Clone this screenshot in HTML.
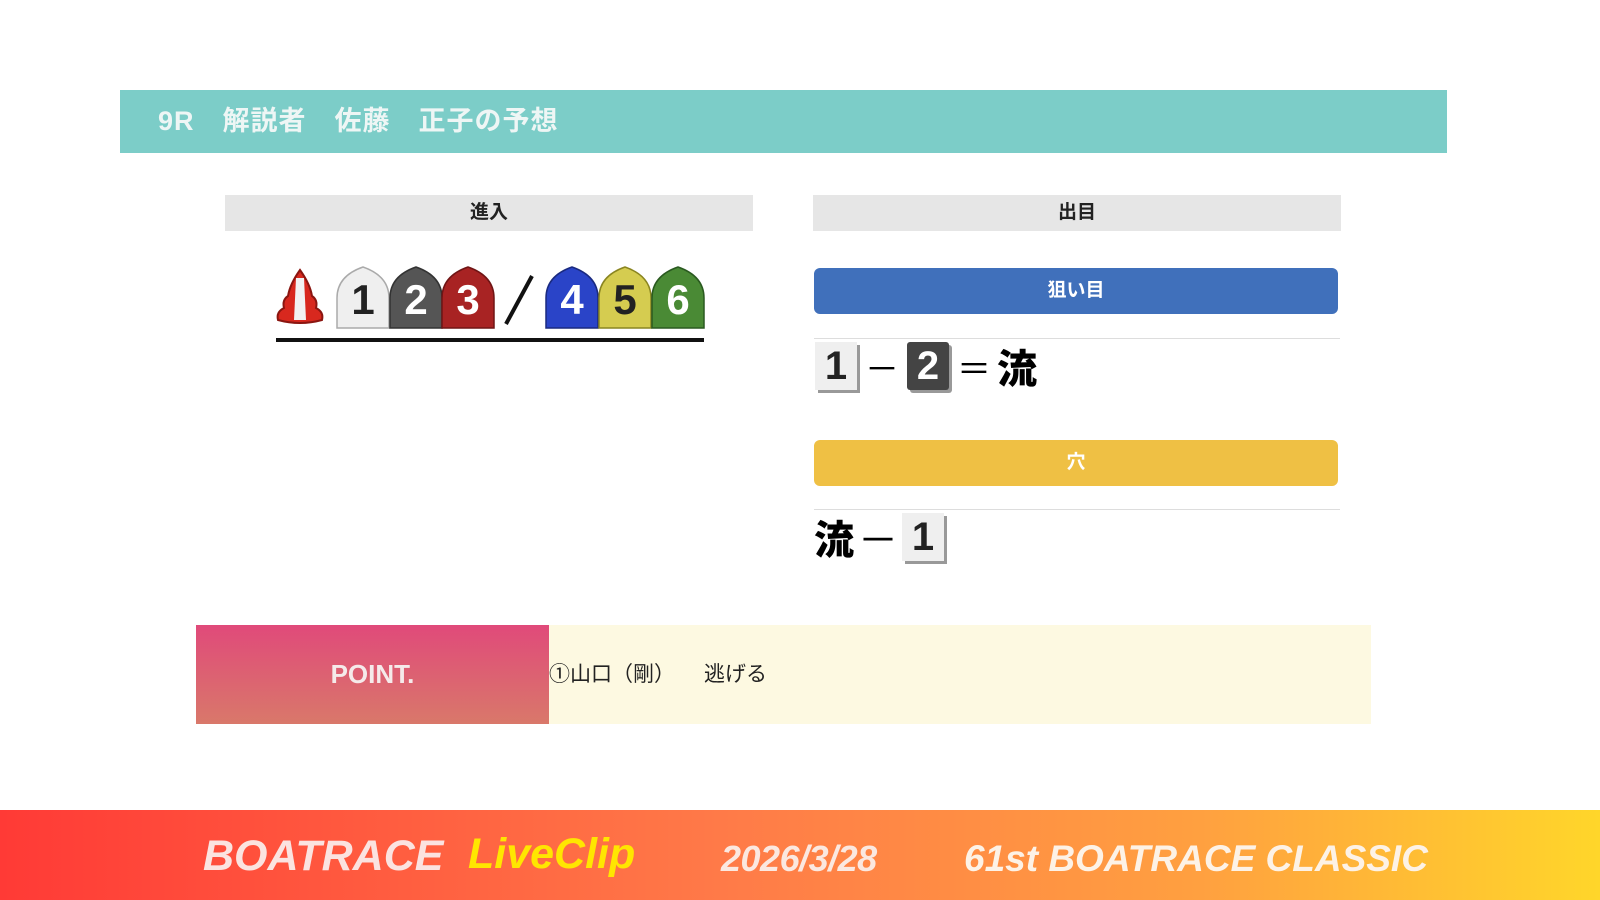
<!DOCTYPE html>
<html><head><meta charset="utf-8"><style>
*{margin:0;padding:0;box-sizing:border-box}
body{width:1600px;height:900px;background:#fff;position:relative;overflow:hidden;font-family:"Liberation Sans","Noto Sans CJK JP",sans-serif}
.a{position:absolute}
.hdr{left:120px;top:90px;width:1327px;height:63px;background:#7ccdc8;color:#eef6f5;font-weight:bold;font-size:27px;line-height:63px;padding-left:38px;white-space:pre;letter-spacing:1px}
.gh{top:195px;height:36px;width:528px;background:#e6e6e6;text-align:center;font-weight:bold;font-size:19px;line-height:36px;color:#222}
.btn{left:814px;width:524px;height:46px;border-radius:6px;color:#fff;text-align:center;font-weight:bold;font-size:19px;line-height:46px}
.ln{left:814px;width:526px;height:1px;background:#ddd}
.k{display:inline-block;width:42px;height:48px;font-size:40px;font-weight:bold;text-align:center;line-height:48px;box-shadow:3px 3px 0 #999;vertical-align:middle}
.big{font-size:40px;font-weight:900;vertical-align:middle}
</style></head><body>
<div class="a hdr">9R　解説者　佐藤　正子の予想</div>
<div class="a gh" style="left:225px">進入</div>
<div class="a gh" style="left:813px">出目</div>

<svg class="a" style="left:270px;top:262px" width="440" height="82" viewBox="0 0 440 82">
<g stroke-width="2">
<path d="M8,58 Q6,50 14,46 Q12,38 18,34 Q20,22 30,8 Q40,22 42,34 Q48,38 46,46 Q54,50 52,58 Q30,64 8,58Z" fill="#d8281e" stroke="#8a1510"/>
<path d="M26,16 L24,58 L36,58 L34,16Z" fill="#f2f2f2"/>
</g>
<g stroke-width="1.5" font-family="Liberation Sans" font-weight="bold" font-size="42" text-anchor="middle">
<path d="M67,66 V36 Q67,14 93,5 Q119,14 119,36 V66Z" fill="#efefef" stroke="#aaa"/>
<text x="93" y="52" fill="#222">1</text>
<path d="M120,66 V36 Q120,14 146,5 Q172,14 172,36 V66Z" fill="#555" stroke="#333"/>
<text x="146" y="52" fill="#fff">2</text>
<path d="M172,66 V36 Q172,14 198,5 Q224,14 224,36 V66Z" fill="#a82323" stroke="#701515"/>
<text x="198" y="52" fill="#fff">3</text>
<path d="M276,66 V36 Q276,14 302,5 Q328,14 328,36 V66Z" fill="#2a44c8" stroke="#1a2a80"/>
<text x="302" y="52" fill="#fff">4</text>
<path d="M329,66 V36 Q329,14 355,5 Q381,14 381,36 V66Z" fill="#d5cc50" stroke="#8a8520"/>
<text x="355" y="52" fill="#222">5</text>
<path d="M382,66 V36 Q382,14 408,5 Q434,14 434,36 V66Z" fill="#4a8a35" stroke="#2a5a20"/>
<text x="408" y="52" fill="#fff">6</text>
</g>
<line x1="236" y1="62" x2="262" y2="14" stroke="#111" stroke-width="4"/>
<rect x="6" y="76" width="428" height="4" fill="#111"/>
</svg>

<div class="a btn" style="top:268px;background:#4070bb">狙い目</div>
<div class="a ln" style="top:338px"></div>
<div class="a" style="left:815px;top:337px;white-space:nowrap">
<span class="k" style="background:#efefef;color:#222">1</span><span class="big" style="margin:0 8px 0 8px;font-weight:400;font-size:34px">－</span><span class="k" style="background:#444;color:#fff;border-radius:3px">2</span><span class="big" style="margin:0 6px 0 8px;font-weight:400;font-size:34px">＝</span><span class="big">流</span>
</div>
<div class="a btn" style="top:440px;background:#efc044">穴</div>
<div class="a ln" style="top:509px"></div>
<div class="a" style="left:814px;top:508px;white-space:nowrap">
<span class="big">流</span><span class="big" style="margin:0 4px;font-weight:400">－</span><span class="k" style="background:#efefef;color:#222">1</span>
</div>

<div class="a" style="left:196px;top:625px;width:353px;height:99px;background:linear-gradient(#e04a7a,#d9786a);color:#f5eaea;font-weight:bold;font-size:26px;line-height:99px;text-align:center">POINT.</div>
<div class="a" style="left:549px;top:625px;width:822px;height:99px;background:#fdf9e1;font-size:21px;line-height:99px;color:#222;white-space:pre">①山口（剛）<span style="display:inline-block;width:29px"></span>逃げる</div>

<div class="a" style="left:0;top:810px;width:1600px;height:90px;background:linear-gradient(90deg,#ff3a36,#ff7a48 45%,#ffa040 75%,#ffd62a)"></div>
<div class="a" style="left:203px;top:832px;font-style:italic;font-weight:bold;font-size:43px;color:#fbe3e0;white-space:nowrap">BOATRACE</div>
<div class="a" style="left:468px;top:830px;font-style:italic;font-weight:bold;font-size:43px;color:#ffe600;white-space:nowrap">LiveClip</div>
<div class="a" style="left:721px;top:838px;font-style:italic;font-weight:bold;font-size:36px;color:#fbe8e0;white-space:nowrap;letter-spacing:-0.5px">2026/3/28</div>
<div class="a" style="left:964px;top:838px;font-style:italic;font-weight:bold;font-size:37px;color:#fdf2e6;white-space:nowrap">61st BOATRACE CLASSIC</div>
</body></html>
